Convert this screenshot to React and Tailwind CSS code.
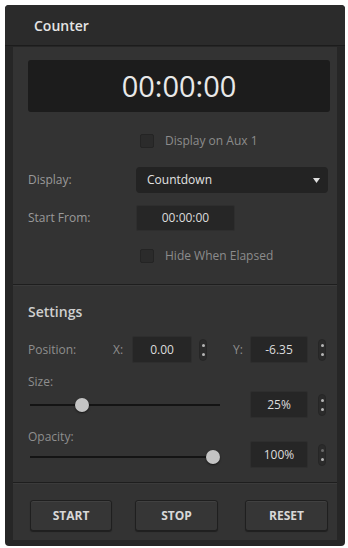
import React from 'react';

const font = { fontFamily: '"Open Sans", "Liberation Sans", sans-serif' };

function Checkbox({ label }) {
  return (
    <div className="flex items-center h-[28px] pl-[112px]">
      <div className="w-[14px] h-[14px] bg-[#2b2b2b] border border-[#242424] rounded-[2px]" />
      <span className="ml-[11px] text-[12px] text-[#8c8c8c]">{label}</span>
    </div>
  );
}

function Stepper({ dim }) {
  return (
    <div className="w-[8px] h-[22px] rounded-full bg-[#2b2b2b] border border-[#262626] flex flex-col items-center justify-between py-[4px]">
      <div className={`w-[3px] h-[3px] rounded-full ${dim ? 'bg-[#6a6a6a]' : 'bg-[#b5b5b5]'}`} />
      <div className="w-[3px] h-[3px] rounded-full bg-[#b5b5b5]" />
    </div>
  );
}

function NumBox({ value, w = 'w-[58px]' }) {
  return (
    <div className={`${w} h-[27px] bg-[#262626] border border-[#2e2e2e] rounded-[2px] flex items-center justify-center text-[12px] text-[#dcdcdc]`}>
      {value}
    </div>
  );
}

function Slider({ pos }) {
  return (
    <div className="relative w-[190px] h-[14px] ml-[2px] flex items-center">
      <div className="w-full h-[2px] bg-[#141414]" />
      <div
        className="absolute top-0 w-[14px] h-[14px] rounded-full bg-[#c4c4c4] shadow-[0_1px_2px_rgba(0,0,0,0.6)]"
        style={{ left: pos - 7 }}
      />
    </div>
  );
}

function Button({ label, w }) {
  return (
    <div className={`${w} h-[31px] rounded-[3px] bg-[#363636] border border-[#1f1f1f] shadow-[inset_0_1px_0_rgba(255,255,255,0.06),0_1px_1px_rgba(0,0,0,0.4)] flex items-center justify-center text-[12px] font-bold text-[#d8d8d8]`}>
      {label}
    </div>
  );
}

export default function App() {
  return (
    <div className="w-[348px] h-[548px] bg-white pt-[5px] pl-[5px]" style={font}>
      <div className="w-[340px] h-[541px] bg-[#262626] rounded-[4px] flex flex-col">
        {/* header */}
        <div className="h-[41px] flex items-center pl-[29px] bg-[#2b2b2b] rounded-t-[4px] border-b border-[#1c1c1c]">
          <span className="text-[14px] font-semibold text-[#e4e4e4]">Counter</span>
        </div>

        <div className="mx-[8px] mt-[1px] bg-[#333333] flex flex-col">
          {/* counter section */}
          <div className="flex flex-col pt-[13px] pb-[14px] pl-[15px] border-b border-[#1e1e1e]">
            <div className="w-[302px] h-[52px] bg-[#1c1c1c] rounded-[3px] flex items-center justify-center text-[29px] text-[#e8e8e8]">
              00:00:00
            </div>
            <div className="mt-[15px]">
              <Checkbox label="Display on Aux 1" />
            </div>
            <div className="mt-[12px] h-[26px] flex items-center">
              <span className="w-[108px] text-[12px] text-[#9a9a9a]">Display:</span>
              <div className="w-[192px] h-[26px] bg-[#232323] rounded-[4px] flex items-center justify-between pl-[11px] pr-[8px]">
                <span className="text-[12px] text-[#e2e2e2]">Countdown</span>
                <svg width="7" height="5" viewBox="0 0 7 5"><path d="M0 0h7L3.5 5z" fill="#e0e0e0" /></svg>
              </div>
            </div>
            <div className="mt-[12px] h-[26px] flex items-center">
              <span className="w-[108px] text-[12px] text-[#9a9a9a]">Start From:</span>
              <div className="w-[99px] h-[26px] bg-[#262626] border border-[#2e2e2e] rounded-[2px] flex items-center justify-center text-[12px] text-[#dcdcdc]">
                00:00:00
              </div>
            </div>
            <div className="mt-[11px]">
              <Checkbox label="Hide When Elapsed" />
            </div>
          </div>

          {/* settings section */}
          <div className="flex flex-col pt-[13px] pb-[14px] pl-[15px] border-t border-[#3b3b3b] border-b-[#1e1e1e] border-b">
            <div className="h-[24px] flex items-center">
              <span className="text-[14px] font-semibold text-[#cfcfcf]">Settings</span>
            </div>
            <div className="mt-[13px] h-[27px] flex items-center">
              <span className="w-[85px] text-[12px] text-[#8e8e8e]">Position:</span>
              <span className="w-[19px] text-[12px] text-[#8e8e8e]">X:</span>
              <NumBox value="0.00" w="w-[60px]" />
              <div className="ml-[7px]"><Stepper /></div>
              <span className="ml-[26px] w-[17px] text-[12px] text-[#8e8e8e]">Y:</span>
              <NumBox value="-6.35" />
              <div className="ml-[10px]"><Stepper /></div>
            </div>
            <div className="mt-[10px] flex">
              <div className="flex flex-col w-[222px]">
                <span className="h-[18px] leading-[18px] text-[12px] text-[#8e8e8e]">Size:</span>
                <div className="h-[28px] flex items-center"><Slider pos={52} /></div>
              </div>
              <div className="flex items-end">
                <div className="flex items-center mb-[1px]">
                  <NumBox value="25%" />
                  <div className="ml-[10px]"><Stepper /></div>
                </div>
              </div>
            </div>
            <div className="mt-[9px] flex">
              <div className="flex flex-col w-[222px]">
                <span className="h-[18px] leading-[18px] text-[12px] text-[#8e8e8e]">Opacity:</span>
                <div className="h-[22px] flex items-center"><Slider pos={183} /></div>
              </div>
              <div className="flex items-end">
                <div className="flex items-center">
                  <NumBox value="100%" />
                  <div className="ml-[10px]"><Stepper dim /></div>
                </div>
              </div>
            </div>
          </div>

          {/* buttons */}
          <div className="h-[57px] flex items-start pt-[16px] pl-[17px] border-t border-[#3b3b3b]">
            <Button label="START" w="w-[82px]" />
            <div className="ml-[23px]"><Button label="STOP" w="w-[83px]" /></div>
            <div className="ml-[27px]"><Button label="RESET" w="w-[83px]" /></div>
          </div>
        </div>
      </div>
    </div>
  );
}
